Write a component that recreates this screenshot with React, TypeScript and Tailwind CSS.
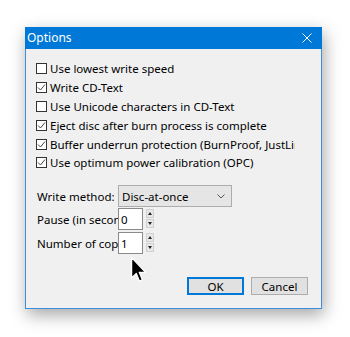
import * as React from 'react';

const options = [
  { label: 'Use lowest write speed', checked: false },
  { label: 'Write CD-Text', checked: true },
  { label: 'Use Unicode characters in CD-Text', checked: false },
  { label: 'Eject disc after burn process is complete', checked: true },
  { label: 'Buffer underrun protection (BurnProof, JustLink, etc.)', checked: true },
  { label: 'Use optimum power calibration (OPC)', checked: true },
];

const CheckBox: React.FC<{ checked: boolean }> = ({ checked }) => (
  <div className="w-[11px] h-[11px] shrink-0 border border-[#333333] bg-white flex items-center justify-center">
    {checked && (
      <svg width="9" height="9" viewBox="0 0 9 9" fill="none">
        <path d="M1 4.5 L3.5 7 L8 1.5" stroke="#444" strokeWidth="1" />
      </svg>
    )}
  </div>
);

const Spinner: React.FC = () => (
  <div className="flex flex-col gap-[1px] ml-[3px] pt-[1px]">
    <div className="w-[8px] h-[9px] bg-[#e8e8e8] border border-[#d0d0d0] flex items-center justify-center">
      <svg width="4" height="3" viewBox="0 0 4 3">
        <path d="M0 3 L2 0 L4 3 Z" fill="#222" />
      </svg>
    </div>
    <div className="w-[8px] h-[9px] bg-[#e8e8e8] border border-[#d0d0d0] flex items-center justify-center">
      <svg width="4" height="3" viewBox="0 0 4 3">
        <path d="M0 0 L2 3 L4 0 Z" fill="#222" />
      </svg>
    </div>
  </div>
);

const NumberField: React.FC<{ label: string; value: string }> = ({ label, value }) => (
  <div className="flex items-start h-[22px]">
    <div className="w-[81px] h-[22px] flex items-center overflow-hidden whitespace-nowrap">{label}</div>
    <div className="w-[25px] h-[22px] bg-white border border-[#8a8a8a] flex items-center pl-[2px]">{value}</div>
    <Spinner />
  </div>
);

export default function App() {
  return (
    <div
      className="relative w-[350px] h-[337px] bg-white text-[11.5px] text-black overflow-hidden"
      style={{ fontFamily: '"Noto Sans", "Open Sans", sans-serif' }}
    >
      <div className="pl-[25px] pt-[27px]">
        <div className="w-[297px] h-[282px] flex flex-col shadow-[2px_6px_16px_rgba(0,0,0,0.35)]">
          {/* Title bar */}
          <div className="h-[22px] bg-[#0078d7] text-white text-[12px] flex items-center justify-between pl-[2px] pr-[10px]">
            <span>Options</span>
            <svg width="10" height="10" viewBox="0 0 10 10">
              <path d="M0.5 0.5 L9.5 9.5 M9.5 0.5 L0.5 9.5" stroke="#fff" strokeWidth="1" />
            </svg>
          </div>

          {/* Body */}
          <div className="flex-1 bg-[#f0f0f0] border-x border-b border-[#3c8fdd] flex flex-col pl-[10px] pt-[10.6px]">
            <div className="flex flex-col w-[259px]">
              {options.map((o) => (
                <div key={o.label} className="h-[18.8px] flex items-center gap-[3px] overflow-hidden whitespace-nowrap">
                  <CheckBox checked={o.checked} />
                  <span>{o.label}</span>
                </div>
              ))}
            </div>

            <div className="flex flex-col mt-[13px] pl-[1px]">
              <div className="flex items-center h-[22px]">
                <div className="w-[81px] whitespace-nowrap">Write method:</div>
                <div className="w-[114px] h-[22px] bg-[#e5e5e5] border border-[#adadad] flex items-center justify-between pl-[3px] pr-[6px]">
                  <span>Disc-at-once</span>
                  <svg width="8" height="5" viewBox="0 0 8 5" fill="none">
                    <path d="M0.5 0.5 L4 4 L7.5 0.5" stroke="#555" strokeWidth="1" />
                  </svg>
                </div>
              </div>
              <div className="flex flex-col gap-[2px] mt-[1px]">
                <NumberField label="Pause (in seconds):" value="0" />
                <NumberField label="Number of copies:" value="1" />
              </div>
            </div>

            <div className="flex justify-end gap-[7px] mt-[23px] pr-[13px]">
              <button className="w-[57px] h-[18px] bg-[#e1e1e1] border-2 border-[#0078d7] flex items-center justify-center">
                OK
              </button>
              <button className="w-[57px] h-[18px] bg-[#e1e1e1] border border-[#adadad] flex items-center justify-center">
                Cancel
              </button>
            </div>
          </div>
        </div>
      </div>

      {/* Mouse pointer */}
      <svg className="absolute left-[131px] top-[257px]" width="16" height="26" viewBox="0 0 13 21">
        <path
          d="M0.5 0.5 L0.5 17 L4.3 13.3 L6.8 19.5 L9.2 18.5 L6.7 12.4 L11.8 12.4 Z"
          fill="#000"
          stroke="#fff"
          strokeWidth="1"
          strokeLinejoin="round"
        />
      </svg>
    </div>
  );
}
